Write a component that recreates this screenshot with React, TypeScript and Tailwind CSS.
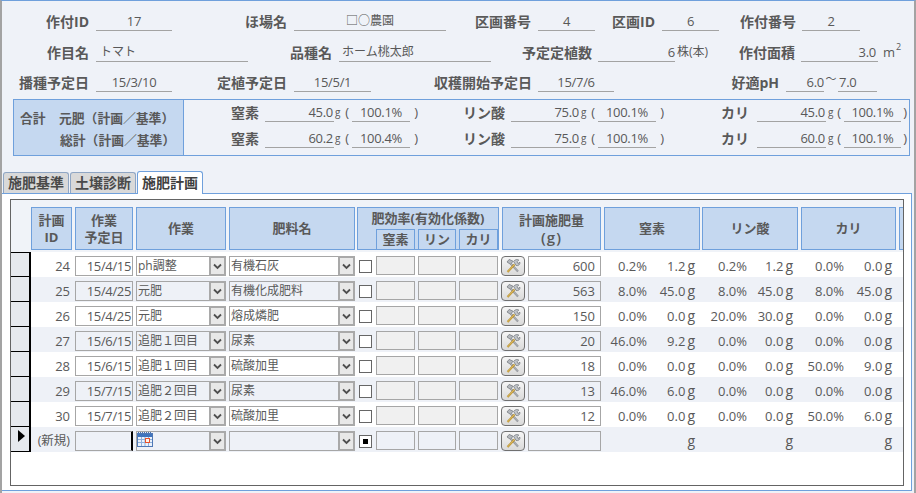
import React from "react";

const L = ({ className = "", children }: { className?: string; children?: React.ReactNode }) => (
  <span className={`shrink-0 text-right text-[14px] font-bold leading-[18px] whitespace-nowrap ${className}`}>{children}</span>
);
const V = ({ className = "", children }: { className?: string; children?: React.ReactNode }) => (
  <span className={`shrink-0 h-[18px] border-b border-[#a3a3a3] text-[13px] tracking-[-0.3px] leading-[16px] whitespace-nowrap ${className}`}>{children}</span>
);
const T = ({ className = "", children }: { className?: string; children?: React.ReactNode }) => (
  <span className={`shrink-0 h-[18px] border-b border-[#a3a3a3] text-[12px] leading-[16px] whitespace-nowrap ${className}`}>{children}</span>
);

const Chevron = () => (
  <svg width="9" height="7" viewBox="0 0 9 7" fill="none">
    <path d="M1 1.5 L4.5 5 L8 1.5" stroke="#4f4f4f" strokeWidth="1.8" />
  </svg>
);

const Combo = ({ className = "", value }: { className?: string; value: string }) => (
  <div className={`shrink-0 h-[20px] flex border border-[#a6a6a6] ${className}`}>
    <span className="flex-1 pl-[1px] leading-[18px] text-[12px] whitespace-nowrap overflow-hidden">{value}</span>
    <span className="w-[17px] -my-[1px] -mr-[1px] h-[20px] flex items-center justify-center bg-[#e8e8e8] border-2 border-[#a9a9a9]">
      <Chevron />
    </span>
  </div>
);

const Tools = () => (
  <svg width="16" height="16" viewBox="0 0 16 16" fill="none">
    <path d="M13 13.5 L6 6" stroke="#8d9196" strokeWidth="2" />
    <path d="M13 13.5 L6 6" stroke="#c9ccd0" strokeWidth="0.7" />
    <path d="M2 4 L4.2 1.4 L8 3.2 L5.6 6.4 Z" fill="#b4b8bd" stroke="#6d7177" strokeWidth="0.7" />
    <path d="M2.5 14 L9.5 6.5" stroke="#b98f2e" strokeWidth="2" />
    <path d="M2.5 14 L9.5 6.5" stroke="#ecd27c" strokeWidth="0.7" />
    <path d="M8.6 3.4 C10 1.4 12.4 1.2 13.8 2 L12 3.8 L13 5.6 L14.9 4.2 C15.3 6.4 13.4 8.2 11 7.4 Z" fill="#c3c7cc" stroke="#6d7177" strokeWidth="0.7" />
  </svg>
);

const Calendar = () => (
  <svg width="16" height="15" viewBox="0 0 16 15" className="ml-[1px] mt-[1px]">
    <path d="M1 0.5 H15" stroke="#4a6fa8" strokeWidth="1" strokeDasharray="1 1" />
    <rect x="0.5" y="1.5" width="15" height="13" fill="#eaf2fc" stroke="#4f78b5" />
    <rect x="1" y="2" width="14" height="3" fill="#3f74bd" />
    <path d="M1 7.5 H15 M1 10.5 H15 M4.5 5 V14 M8 5 V14 M11.5 5 V14" stroke="#8fb0dc" strokeWidth="1" />
    <rect x="8.5" y="6.5" width="4" height="4" fill="#fff4ea" stroke="#e8502a" />
  </svg>
);

type R = {
  id: string; date: string; work: string; fert: string; amount: string;
  a: string; ag: string; b: string; bg: string; c: string; cg: string;
};
const rows: R[] = [
  { id: "24", date: "15/4/15", work: "ph調整", fert: "有機石灰", amount: "600", a: "0.2%", ag: "1.2", b: "0.2%", bg: "1.2", c: "0.0%", cg: "0.0" },
  { id: "25", date: "15/4/25", work: "元肥", fert: "有機化成肥料", amount: "563", a: "8.0%", ag: "45.0", b: "8.0%", bg: "45.0", c: "8.0%", cg: "45.0" },
  { id: "26", date: "15/4/25", work: "元肥", fert: "熔成燐肥", amount: "150", a: "0.0%", ag: "0.0", b: "20.0%", bg: "30.0", c: "0.0%", cg: "0.0" },
  { id: "27", date: "15/6/15", work: "追肥１回目", fert: "尿素", amount: "20", a: "46.0%", ag: "9.2", b: "0.0%", bg: "0.0", c: "0.0%", cg: "0.0" },
  { id: "28", date: "15/6/15", work: "追肥１回目", fert: "硫酸加里", amount: "18", a: "0.0%", ag: "0.0", b: "0.0%", bg: "0.0", c: "50.0%", cg: "9.0" },
  { id: "29", date: "15/7/15", work: "追肥２回目", fert: "尿素", amount: "13", a: "46.0%", ag: "6.0", b: "0.0%", bg: "0.0", c: "0.0%", cg: "0.0" },
  { id: "30", date: "15/7/15", work: "追肥２回目", fert: "硫酸加里", amount: "12", a: "0.0%", ag: "0.0", b: "0.0%", bg: "0.0", c: "50.0%", cg: "6.0" },
];

const Gram = ({ className = "", v }: { className?: string; v: string }) => (
  <span className={`shrink-0 text-right leading-[20px] whitespace-nowrap ${className}`}>
    {v}
    <span className="ml-[2px] text-[14px]">g</span>
  </span>
);

const Cells = ({ r, alt, isNew, first }: { r?: R; alt: boolean; isNew?: boolean; first?: boolean }) => {
  const inputBg = alt ? "bg-[#eef1f7]" : "bg-white";
  return (
    <div className={`flex h-[25px] shrink-0 text-[13px] ${alt ? "bg-[#eef1f7]" : "bg-white"}`}>
      <div className={`w-[20px] shrink-0 bg-[#e6e9ee] border-r-2 border-b border-black flex justify-end ${first ? "border-t" : ""}`}>
        {isNew && (
          <svg width="8" height="12" viewBox="0 0 8 12" className="mr-[3px] mt-[3px]">
            <path d="M0 0 L7 6 L0 12 Z" fill="#000" />
          </svg>
        )}
      </div>
      <div className={`w-[41px] shrink-0 text-right pr-[2px] pt-[4px] leading-[20px] ${isNew ? "text-[12.5px]" : ""}`}>
        {isNew ? "(新規)" : r!.id}
      </div>
      <div className={`ml-[3px] mt-[4px] w-[58px] h-[20px] shrink-0 border border-[#a6a6a6] text-right tracking-[-0.35px] pr-[1px] leading-[18px] ${inputBg} ${isNew ? "border-r-2 border-r-black" : ""}`}>
        {r?.date}
      </div>
      <div className="ml-[3px] mt-[4px] shrink-0 relative">
        <Combo className={`w-[90px] ${inputBg}`} value={r?.work ?? ""} />
        {isNew && (
          <span className="absolute left-0 top-0">
            <Calendar />
          </span>
        )}
      </div>
      <Combo className={`ml-[3px] mt-[4px] w-[126px] ${inputBg}`} value={r?.fert ?? ""} />
      <span className="ml-[4px] mt-[8px] w-[13px] h-[13px] shrink-0 border border-[#666] bg-white flex items-center justify-center">
        {isNew && <span className="w-[5px] h-[5px] bg-black" />}
      </span>
      <span className={`ml-[4px] mt-[4px] w-[39px] h-[19px] shrink-0 border border-[#a6a6a6] ${isNew ? "bg-[#eef1f7]" : "bg-[#f0f0f0]"}`} />
      <span className={`ml-[3px] mt-[4px] w-[38px] h-[19px] shrink-0 border border-[#a6a6a6] ${isNew ? "bg-[#eef1f7]" : "bg-[#f0f0f0]"}`} />
      <span className={`ml-[3px] mt-[4px] w-[39px] h-[19px] shrink-0 border border-[#a6a6a6] ${isNew ? "bg-[#eef1f7]" : "bg-[#f0f0f0]"}`} />
      <span className="ml-[3px] mt-[4px] w-[24px] h-[20px] shrink-0 rounded-[4px] border border-[#707070] bg-gradient-to-b from-[#f6f6f6] to-[#dadada] flex items-center justify-center">
        <Tools />
      </span>
      <span className={`ml-[3px] mt-[4px] w-[73px] h-[20px] shrink-0 border border-[#a6a6a6] text-right pr-[5px] leading-[18px] ${inputBg}`}>
        {r?.amount}
      </span>
      <span className="w-[46px] shrink-0 text-right pt-[4px] leading-[20px]">{r?.a}</span>
      <Gram className="w-[48px] pt-[4px]" v={r?.ag ?? ""} />
      <span className="w-[52px] shrink-0 text-right pt-[4px] leading-[20px]">{r?.b}</span>
      <Gram className="w-[46px] pt-[4px]" v={r?.bg ?? ""} />
      <span className="w-[51px] shrink-0 text-right pt-[4px] leading-[20px]">{r?.c}</span>
      <Gram className="w-[48px] pt-[4px]" v={r?.cg ?? ""} />
    </div>
  );
};

const Head = ({ className = "", children }: { className?: string; children?: React.ReactNode }) => (
  <div className={`shrink-0 h-[43px] bg-[#c5d8f0] border border-[#6fa0dc] text-[13px] font-bold leading-[17px] flex flex-col items-center justify-center text-center ${className}`}>
    {children}
  </div>
);
const SubHead = ({ className = "", children }: { className?: string; children?: React.ReactNode }) => (
  <div className={`h-[20px] border border-[#6fa0dc] border-b-0 text-[13px] font-bold leading-[19px] text-center ${className}`}>{children}</div>
);

const Tab = ({ active, children }: { active?: boolean; children?: React.ReactNode }) => (
  <div
    className={`w-[66px] text-center text-[14px] font-bold rounded-t-[3px] border border-b-0 ${
      active
        ? "h-[23px] bg-white border-[#6fa0dc] text-[#404040] leading-[22px] relative z-10 -mb-[1px]"
        : "h-[21px] bg-[#d9d9d9] border-[#8fa6c4] text-[#4a4a4a] leading-[20px]"
    }`}
  >
    {children}
  </div>
);

const Unit = ({ className = "" }: { className?: string }) => (
  <span className={`w-[18px] shrink-0 flex justify-between text-[10px] leading-[16px] pr-[3px] ${className}`}>
    <span>g</span>
    <span className="text-[13px]">(</span>
  </span>
);
const Close = ({ className = "" }: { className?: string }) => (
  <span className={`shrink-0 text-right text-[13px] leading-[16px] ${className}`}>)</span>
);

const NutrientRow = ({ g1, p1, g2, p2, g3, p3 }: { g1: string; p1: string; g2: string; p2: string; g3: string; p3: string }) => (
  <div className="flex h-[18px]">
    <L className="w-[75px]">窒素</L>
    <V className="ml-[6px] w-[69px] text-right pr-[1px]">{g1}</V>
    <Unit className="pl-[1px]" />
    <V className="w-[58px] text-center">{p1}</V>
    <Close className="w-[8px]" />
    <L className="w-[87px]">リン酸</L>
    <V className="ml-[6px] w-[69px] text-right pr-[1px]">{g2}</V>
    <Unit className="pl-[1px]" />
    <V className="w-[58px] text-center">{p2}</V>
    <Close className="w-[8px]" />
    <L className="w-[85px]">カリ</L>
    <V className="ml-[8px] w-[69px] text-right pr-[1px]">{g3}</V>
    <Unit className="pl-[2px]" />
    <V className="w-[57px] text-center">{p3}</V>
    <Close className="w-[6px]" />
  </div>
);

export default function App() {
  return (
    <div className="w-[916px] h-[493px] overflow-hidden flex flex-col bg-[#eff2f8] border-t border-[#6fa0dc] border-l-2 border-l-[#a3a3a3] border-r-2 border-r-[#a3a3a3] text-[#595959] font-['Open_Sans','Noto_Sans_CJK_JP',sans-serif]">
      <div className="flex h-[18px] mt-[12px] shrink-0">
        <L className="w-[87px]">作付ID</L>
        <V className="ml-[7px] w-[76px] text-center">17</V>
        <L className="w-[115px]">ほ場名</L>
        <T className="ml-[7px] w-[152px] text-center">□○農園</T>
        <L className="w-[85px]">区画番号</L>
        <V className="ml-[7px] w-[57px] text-center">4</V>
        <L className="w-[60px]">区画ID</L>
        <V className="ml-[7px] w-[57px] text-center">6</V>
        <L className="w-[77px]">作付番号</L>
        <V className="ml-[6px] w-[58px] text-center">2</V>
      </div>
      <div className="flex h-[18px] mt-[13px] shrink-0">
        <L className="w-[87px]">作目名</L>
        <T className="ml-[7px] w-[152px] pl-[4px]">トマト</T>
        <L className="w-[84px]">品種名</L>
        <T className="ml-[7px] w-[152px] pl-[3px]">ホーム桃太郎</T>
        <L className="w-[101px]">予定定植数</L>
        <V className="ml-[6px] w-[77px] text-right">6</V>
        <span className="w-[36px] shrink-0 pl-[2px] text-[12px] leading-[16px] whitespace-nowrap">株(本)</span>
        <L className="w-[84px]">作付面積</L>
        <V className="ml-[6px] w-[77px] text-right pr-[2px]">3.0</V>
        <span className="ml-[5px] text-[13px] leading-[16px] tracking-[1px] whitespace-nowrap">m<sup className="text-[9px] align-[3px] leading-none">2</sup></span>
      </div>
      <div className="flex h-[18px] mt-[12px] shrink-0">
        <L className="w-[87px]">播種予定日</L>
        <V className="ml-[7px] w-[76px] text-center">15/3/10</V>
        <L className="w-[115px]">定植予定日</L>
        <V className="ml-[7px] w-[77px] text-center">15/5/1</V>
        <L className="w-[161px]">収穫開始予定日</L>
        <V className="ml-[6px] w-[76px] text-center">15/7/6</V>
        <L className="w-[165px]">好適pH</L>
        <V className="ml-[7px] w-[38px] text-right">6.0</V>
        <span className="w-[14px] shrink-0 text-center text-[11px] leading-[10px]">〜</span>
        <V className="w-[39px] pl-[1px]">7.0</V>
      </div>
      <div className="ml-[11px] mt-[7px] w-[897px] h-[57px] shrink-0 flex border border-[#6fa0dc]">
        <div className="w-[170px] shrink-0 bg-[#c5d8f0] border-r border-[#6fa0dc] text-[12.8px] font-bold leading-[18px] pt-[9px] pl-[6px] flex flex-col gap-[4px] whitespace-nowrap [text-spacing-trim:space-all]">
          <div className="flex">
            <span className="w-[39px]">合計</span>
            <span>元肥（計画／基準）</span>
          </div>
          <div className="flex">
            <span className="w-[40px]" />
            <span>総計（計画／基準）</span>
          </div>
        </div>
        <div className="flex flex-col pt-[4px] gap-[8px]">
          <NutrientRow g1="45.0" p1="100.1%" g2="75.0" p2="100.1%" g3="45.0" p3="100.1%" />
          <NutrientRow g1="60.2" p1="100.4%" g2="75.0" p2="100.1%" g3="60.0" p3="100.1%" />
        </div>
      </div>
      <div className="flex items-end ml-[1px] mt-[15px] gap-[1px] h-[22px] shrink-0">
        <Tab>施肥基準</Tab>
        <Tab>土壌診断</Tab>
        <Tab active>施肥計画</Tab>
      </div>
      <div className="w-[910px] h-[298px] shrink-0 bg-white border-t border-r border-b border-[#6fa0dc] pt-[5px] pl-[8px]">
        <div className="w-[894px] h-[287px] border border-[#646464] flex flex-col overflow-hidden">
          <div className="h-[52px] shrink-0 bg-[#f0f3f8] flex pt-[7px]">
            <Head className="ml-[20px] w-[41px]"><span>計画</span><span>ID</span></Head>
            <Head className="ml-[3px] w-[58px]"><span>作業</span><span>予定日</span></Head>
            <Head className="ml-[3px] w-[90px]">作業</Head>
            <Head className="ml-[3px] w-[126px]">肥料名</Head>
            <div className="ml-[2px] w-[142px] h-[43px] shrink-0 bg-[#c5d8f0] border border-[#6fa0dc] flex flex-col">
              <div className="h-[21px] text-[13px] font-bold leading-[20px] text-center whitespace-nowrap">肥効率(有効化係数)</div>
              <div className="flex justify-end gap-[3px]">
                <SubHead className="w-[39px]">窒素</SubHead>
                <SubHead className="w-[38px]">リン</SubHead>
                <SubHead className="w-[39px]">カリ</SubHead>
              </div>
            </div>
            <Head className="ml-[3px] w-[99px]"><span>計画施肥量</span><span className="text-[15px] tracking-[1px] font-semibold">(g)</span></Head>
            <Head className="ml-[3px] w-[96px]">窒素</Head>
            <Head className="ml-[2px] w-[96px]">リン酸</Head>
            <Head className="ml-[3px] w-[95px]">カリ</Head>
            <Head className="ml-[3px] w-[4px] border-r-0" />
          </div>
          {rows.map((r, i) => (
            <Cells key={r.id} r={r} alt={i % 2 === 1} first={i === 0} />
          ))}
          <Cells alt isNew />
        </div>
      </div>
    </div>
  );
}
